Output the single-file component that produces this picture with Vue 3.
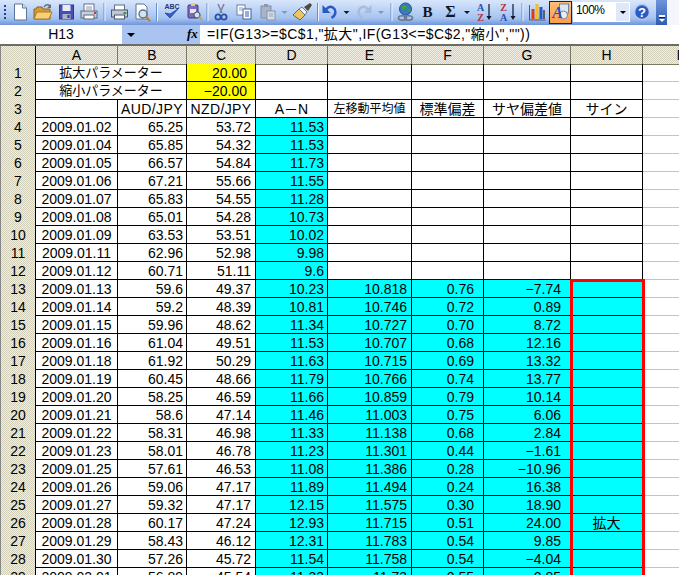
<script setup>
const arrow = '<path d="M-3 -1h6l-3 3z" fill="#101828"/>'
const arrowGrey = '<path d="M-3 -1h6l-3 3z" fill="#8094b8"/>'
const sep = '<path d="M0 -9v18" stroke="#6a8cc8"/><path d="M1 -9v18" stroke="#eef4ff"/>'

const tools = [
  { w: 10, g: '<g fill="#23408a"><rect x="-1" y="-7" width="2" height="2"/><rect x="-1" y="-3" width="2" height="2"/><rect x="-1" y="1" width="2" height="2"/><rect x="-1" y="5" width="2" height="2"/></g>' },
  { w: 21, g: '<path d="M-6 -8h8l4 4v12h-12z" fill="#fff" stroke="#5c7498"/><path d="M2 -8v4h4" fill="#d8e4f4" stroke="#5c7498"/>' },
  { w: 24, g: '<path d="M-9 7v-10h2l1-2h5l1 2h7v10z" fill="#d89a30" stroke="#8a6420"/><path d="M-9 7l3-7h15l-3 7z" fill="#f8d078" stroke="#a87c28"/><path d="M1 -5q3-4 6-1" fill="none" stroke="#607080" stroke-width="1.4"/><path d="M8 -8v4h-4z" fill="#607080"/>' },
  { w: 23, g: '<rect x="-7" y="-7" width="14" height="14" fill="#4a4eb0" stroke="#30348a"/><rect x="-4" y="-7" width="8" height="6" fill="#e8ecf8"/><rect x="-4" y="2" width="8" height="5" fill="#a8b0c8"/><rect x="1" y="3" width="2" height="3" fill="#30348a"/>' },
  { w: 22, g: '<rect x="-5" y="-8" width="10" height="8" fill="#fff" stroke="#607088"/><path d="M-3 -5h6M-3 -3h6" stroke="#8898b8"/><rect x="-8" y="-1" width="16" height="7" fill="#c8d0dc" stroke="#5c6880"/><rect x="-5" y="3" width="10" height="4" fill="#fff" stroke="#5c6880"/><rect x="5" y="0" width="2" height="2" fill="#e03020"/>' },
  { w: 8, g: sep },
  { w: 23, g: '<rect x="-5" y="-7" width="10" height="6" fill="#fff" stroke="#607088"/><rect x="-8" y="-2" width="16" height="7" fill="#c0c8d4" stroke="#4c5870"/><rect x="-5" y="3" width="10" height="4" fill="#fff" stroke="#4c5870"/><rect x="4" y="0" width="3" height="2" fill="#30a030"/>' },
  { w: 22, g: '<path d="M-6 -8h8l3 3v12h-11z" fill="#fff" stroke="#5c7498"/><circle cx="1" cy="2" r="4" fill="#cfe4f4" stroke="#607080" stroke-width="1.4"/><path d="M4 5l4 4" stroke="#b08030" stroke-width="2"/>' },
  { w: 7, g: sep },
  { w: 24, g: '<text x="0" y="-3" text-anchor="middle" font-family="Liberation Sans" font-size="7" font-weight="700" fill="#233a78">ABC</text><path d="M-7 1l5 5l8-9l-8 5z" fill="#3460d0" stroke="#1c3890" stroke-width=".7"/>' },
  { w: 20, g: '<rect x="-6" y="-7" width="10" height="13" rx="1" fill="#7c6cc0" stroke="#403880"/><rect x="-3" y="-9" width="4" height="3" fill="#e8d070"/><rect x="-4" y="-3" width="6" height="4" fill="#e8e4f4"/><circle cx="3" cy="3" r="3" fill="#cfe4f4" stroke="#505868" stroke-width="1.2"/><path d="M5 5l3 3" stroke="#d0a030" stroke-width="2"/>' },
  { w: 6, g: sep },
  { w: 22, g: '<path d="M-3 -8l4 9M3 -8l-4 9" stroke="#788498" stroke-width="1.5"/><circle cx="-3" cy="5" r="2.6" fill="none" stroke="#2a50a8" stroke-width="1.8"/><circle cx="3" cy="5" r="2.6" fill="none" stroke="#2a50a8" stroke-width="1.8"/>' },
  { w: 24, g: '<rect x="-7" y="-7" width="8" height="10" fill="#fff" stroke="#6880a8"/><rect x="-1" y="-3" width="8" height="10" fill="#fff" stroke="#4060a0"/><path d="M1 0h4M1 2h4M1 4h4" stroke="#3058b0"/><path d="M-5 -4h4M-5 -2h4" stroke="#90a0c0"/>' },
  { w: 24, g: '<rect x="-7" y="-6" width="10" height="12" fill="#a8b4c8" stroke="#8090a8"/><rect x="-4" y="-8" width="4" height="3" fill="#8c98b0"/><rect x="-1" y="-1" width="8" height="9" fill="#d4dcea" stroke="#8494ac"/><path d="M1 2h4M1 4h4" stroke="#98a6bc"/>' },
  { w: 9, g: arrowGrey },
  { w: 26, g: '<path d="M-9 3l6-6l6 6l-5 5z" fill="#e8c860" stroke="#786838"/><path d="M-3 -3l3 -2l5 5l-2 3z" fill="#f0f0f0" stroke="#787878"/><path d="M2 -5l6-4l2 2l-4 6z" fill="#50483c"/>' },
  { w: 5, g: sep },
  { w: 21, g: '<path d="M-5 -2q5-6 9-1q3 5-3 9" fill="none" stroke="#2858c0" stroke-width="2.4"/><path d="M-8 -7v8h8z" fill="#2858c0"/>' },
  { w: 11, g: arrow },
  { w: 23, g: '<path d="M5 -2q-5-6-9-1q-3 5 3 9" fill="none" stroke="#a8bcd8" stroke-width="2.4"/><path d="M8 -7v8h-8z" fill="#a8bcd8"/>' },
  { w: 12, g: arrowGrey },
  { w: 8, g: sep },
  { w: 21, g: '<circle cx="0" cy="-3" r="6" fill="#3878c8" stroke="#205090"/><path d="M-4 -6q3 -2 5 0t-1 3t-3 2zM2 -1l3-3v3z" fill="#40a040"/><ellipse cx="-3" cy="6" rx="4" ry="2.2" fill="none" stroke="#687888" stroke-width="1.6"/><ellipse cx="3" cy="6" rx="4" ry="2.2" fill="none" stroke="#687888" stroke-width="1.6"/>' },
  { w: 23, g: '<text x="0" y="5" text-anchor="middle" font-family="Liberation Serif" font-size="15" font-weight="700" fill="#101828">B</text>' },
  { w: 23, g: '<text x="0" y="5" text-anchor="middle" font-family="Liberation Serif" font-size="16" font-weight="700" fill="#101828">Σ</text>' },
  { w: 10, g: arrow },
  { w: 27, g: '<text x="-5" y="-1" text-anchor="middle" font-family="Liberation Serif" font-size="10" font-weight="700" fill="#2850b0">A</text><text x="-5" y="9" text-anchor="middle" font-family="Liberation Serif" font-size="10" font-weight="700" fill="#c03030">Z</text><path d="M3.5 -8v14" stroke="#101828" stroke-width="1.2"/><path d="M1 4h5l-2.500 4z" fill="#101828"/>' },
  { w: 19, g: '<text x="-5" y="-1" text-anchor="middle" font-family="Liberation Serif" font-size="10" font-weight="700" fill="#c03030">Z</text><text x="-5" y="9" text-anchor="middle" font-family="Liberation Serif" font-size="10" font-weight="700" fill="#2850b0">A</text><path d="M4.500 -8v14" stroke="#101828" stroke-width="1.2"/><path d="M2 4h5l-2.500 4z" fill="#101828"/>' },
  { w: 8, g: sep },
  { w: 23, g: '<path d="M-8 -7v15h16" fill="none" stroke="#505868"/><rect x="-6" y="-3" width="3" height="10" fill="#e03820"/><rect x="-2" y="-8" width="3" height="15" fill="#f0c020"/><rect x="2" y="-5" width="3" height="12" fill="#2858c8"/><rect x="5.500" y="-2" width="2" height="9" fill="#586070"/>' },
  { w: 23, on: true, g: '<rect x="-1" y="-8" width="9" height="9" fill="#dfe6f0" stroke="#7a8498"/><circle cx="3" cy="3" r="4" fill="#e8ecf4" stroke="#7a8498"/><text x="-3" y="6" text-anchor="middle" font-family="Liberation Serif" font-size="16" font-weight="700" font-style="italic" fill="#2850a8">A</text>' }
]

const dates = ['01.02','01.04','01.05','01.06','01.07','01.08','01.09','01.11','01.12','01.13','01.14','01.15','01.16','01.18','01.19','01.20','01.21','01.22','01.23','01.25','01.26','01.27','01.28','01.29','01.30','02.01']
const raw = `65.25 53.72 11.53
65.85 54.32 11.53
66.57 54.84 11.73
67.21 55.66 11.55
65.83 54.55 11.28
65.01 54.28 10.73
63.53 53.51 10.02
62.96 52.98 9.98
60.71 51.11 9.6
59.6 49.37 10.23 10.818 0.76 −7.74
59.2 48.39 10.81 10.746 0.72 0.89
59.96 48.62 11.34 10.727 0.70 8.72
61.04 49.51 11.53 10.707 0.68 12.16
61.92 50.29 11.63 10.715 0.69 13.32
60.45 48.66 11.79 10.766 0.74 13.77
58.25 46.59 11.66 10.859 0.79 10.14
58.6 47.14 11.46 11.003 0.75 6.06
58.31 46.98 11.33 11.138 0.68 2.84
58.01 46.78 11.23 11.301 0.44 −1.61
57.61 46.53 11.08 11.386 0.28 −10.96
59.06 47.17 11.89 11.494 0.24 16.38
59.32 47.17 12.15 11.575 0.30 18.90
60.17 47.24 12.93 11.715 0.51 24.00
58.43 46.12 12.31 11.783 0.54 9.85
57.26 45.72 11.54 11.758 0.54 −4.04
56.89 45.54 11.33 11.73 0.55 0.85`

const rows = raw.split('\n').map((line, i) => {
  const v = line.split(' ')
  return { n: i + 4, date: '2009.' + dates[i], b: v[0], c: v[1], d: v[2], e: v[3] || '', f: v[4] || '', g: v[5] || '', h: i + 4 === 26 ? '拡大' : '', fill: i + 4 >= 13 }
})
const letters = ['A', 'B', 'C', 'D', 'E', 'F', 'G', 'H', 'I']
</script>

<template>
  <div class="app">
    <div class="toolbar">
      <div class="tools">
        <span v-for="(t, i) in tools" :key="i" class="tool" :class="{ on: t.on }">
          <svg :width="t.w" height="24" :viewBox="`${-t.w / 2} -12 ${t.w} 24`" v-html="t.g"></svg>
        </span>
        <div class="zoombox">
          <span class="zoomval">100%</span>
          <span class="zoomdrop"><i class="tri"></i></span>
        </div>
        <svg class="help" width="24" height="24" viewBox="-12 -12 24 24">
          <circle r="7.500" fill="#2a5cc8" stroke="#b8c8e8" stroke-width="1.500" />
          <text y="5" text-anchor="middle" font-family="Liberation Sans" font-size="13" font-weight="700" fill="#fff">?</text>
        </svg>
        <div class="endgrip"><i class="bar"></i><i class="tri white"></i></div>
      </div>
    </div>

    <div class="formula">
      <div class="namebox">H13</div>
      <div class="namedrop"><i class="tri"></i></div>
      <div class="fx">fx</div>
      <div class="ftext">=IF(G13&gt;=$C$1,"拡大",IF(G13&lt;=$C$2,"縮小",""))</div>
    </div>

    <div class="sheet">
      <div class="row head">
        <div class="rh corner"></div>
        <div v-for="l in letters" :key="l" class="ch">{{ l }}</div>
      </div>

      <div class="row">
        <div class="rh">1</div>
        <div class="c merged">拡大パラメーター</div>
        <div class="c yellow">20.00</div>
        <div class="c"></div><div class="c"></div><div class="c"></div><div class="c"></div><div class="c"></div>
        <div class="c out"></div>
      </div>
      <div class="row">
        <div class="rh">2</div>
        <div class="c merged">縮小パラメーター</div>
        <div class="c yellow">−20.00</div>
        <div class="c"></div><div class="c"></div><div class="c"></div><div class="c"></div><div class="c"></div>
        <div class="c out"></div>
      </div>
      <div class="row">
        <div class="rh">3</div>
        <div class="c"></div>
        <div class="c ctr wide">AUD/JPY</div>
        <div class="c ctr wide">NZD/JPY</div>
        <div class="c ctr">A－N</div>
        <div class="c ctr small">左移動平均値</div>
        <div class="c ctr">標準偏差</div>
        <div class="c ctr">サヤ偏差値</div>
        <div class="c ctr">サイン</div>
        <div class="c out"></div>
      </div>
      <div v-for="r in rows" :key="r.n" class="row">
        <div class="rh">{{ r.n }}</div>
        <div class="c ctr">{{ r.date }}</div>
        <div class="c pb">{{ r.b }}</div>
        <div class="c pc">{{ r.c }}</div>
        <div class="c pb cyan">{{ r.d }}</div>
        <div class="c pe" :class="{ cyan: r.fill }">{{ r.e }}</div>
        <div class="c pf" :class="{ cyan: r.fill }">{{ r.f }}</div>
        <div class="c pf" :class="{ cyan: r.fill }">{{ r.g }}</div>
        <div class="c ctr" :class="{ cyan: r.fill }">{{ r.h }}</div>
        <div class="c out"></div>
      </div>
      <div class="redbox"></div>
    </div>
  </div>
</template>

<style scoped>
.app {
  width: 679px;
  height: 575px;
  overflow: hidden;
  background: #fff;
  font-family: "Liberation Sans", "Noto Sans CJK JP", sans-serif;
  font-size: 14px;
  color: #000;
}
.toolbar {
  height: 25px;
  background: #f4f6fb;
}
.tools {
  width: 667px;
  height: 25px;
  display: flex;
  align-items: flex-start;
  background: linear-gradient(#d8e6fb 0, #bcd3f6 40%, #a4c2f0 75%, #6e94da 100%);
}
.tool {
  display: block;
  height: 24px;
  flex: none;
}
.tool svg {
  display: block;
}
.tool.on {
  box-sizing: border-box;
  height: 23px;
  margin-top: 1px;
  background: linear-gradient(#ffc078, #fb9c48);
  outline: 1px solid #0a246a;
  outline-offset: -1px;
}
.tool.on svg {
  margin-top: -1px;
}
.zoombox {
  width: 57px;
  height: 20px;
  margin: 2px 0 0 1px;
  display: flex;
  background: #fff;
  flex: none;
}
.zoomval {
  flex: 1;
  padding-left: 3px;
  font-size: 12px;
  letter-spacing: -0.6px;
  line-height: 16px;
}
.zoomdrop {
  width: 13px;
  background: #dfe8f8;
  border: 1px solid #fff;
  display: flex;
  align-items: center;
  justify-content: center;
}
.tri {
  display: block;
  width: 0;
  height: 0;
  border-left: 3px solid transparent;
  border-right: 3px solid transparent;
  border-top: 3px solid #000;
}
.tri.white {
  border-top-color: #fff;
}
.help {
  flex: none;
}
.endgrip {
  margin-left: 2px;
  width: 11px;
  height: 25px;
  flex: none;
  display: flex;
  flex-direction: column;
  align-items: center;
  justify-content: flex-end;
  gap: 2px;
  padding-bottom: 3px;
  box-sizing: border-box;
  background: linear-gradient(#6e94da, #2f5cb4);
}
.bar {
  display: block;
  width: 6px;
  height: 2px;
  background: #fff;
  box-shadow: 0 1px 0 #102050;
}
.formula {
  height: 19px;
  display: flex;
  background: #a9c4f0;
}
.namebox {
  width: 122px;
  background: #fff;
  text-align: center;
  line-height: 19px;
}
.namedrop {
  width: 18px;
  display: flex;
  align-items: center;
  justify-content: center;
}
.namedrop .tri {
  border-left-width: 4px;
  border-right-width: 4px;
  border-top-width: 4px;
}
.fx {
  width: 60px;
  box-sizing: border-box;
  padding-left: 47px;
  font-family: "Liberation Serif", serif;
  font-style: italic;
  font-weight: 700;
  font-size: 13px;
  line-height: 18px;
}
.ftext {
  flex: 1;
  background: #fff;
  padding-left: 7px;
  line-height: 19px;
  white-space: nowrap;
  letter-spacing: 0.43px;
}
.sheet {
  position: relative;
  border-top: 2px solid #6c6c64;
}
.row {
  display: grid;
  grid-template-columns: 36px 82px 69px 69px 72px 84px 72px 87px 72px 72px;
  height: 18px;
}
.rh,
.ch {
  box-sizing: border-box;
  text-align: center;
  background: repeating-conic-gradient(#d2cfba 0 25%, #f1efe3 0 50%) 0 0 / 2px 2px;
  border-right: 1px solid #7c7a62;
  border-bottom: 1px solid #7c7a62;
  line-height: 18px;
}
.rh {
  border-left: 1px solid #888;
  border-right-color: #000;
  border-bottom-color: #908e78;
}
.c {
  box-sizing: border-box;
  border-right: 1px solid #000;
  border-bottom: 1px solid #000;
  text-align: right;
  line-height: 18px;
  white-space: nowrap;
  overflow: hidden;
  height: 18px;
}
.merged {
  grid-column: span 2;
  text-align: center;
  font-size: 13px;
}
.yellow {
  background: #ffff00;
  padding-right: 8px;
}
.ctr {
  text-align: center;
  padding: 0;
}
.wide {
  letter-spacing: 0.4px;
}
.small {
  font-size: 12px;
}
.pb {
  padding-right: 3px;
}
.pc {
  padding-right: 4px;
}
.pe {
  padding-right: 4px;
}
.pf {
  padding-right: 9px;
}
.cyan {
  background: #00ffff;
}
.out {
  border-right: 0;
  border-bottom-color: #c4c4c4;
}
.redbox {
  position: absolute;
  left: 570px;
  top: 233px;
  width: 75px;
  height: 400px;
  box-sizing: border-box;
  border: 3px solid #ff0000;
}
</style>

<style>
html, body {
  margin: 0;
  padding: 0;
  background: #fff;
}
</style>
